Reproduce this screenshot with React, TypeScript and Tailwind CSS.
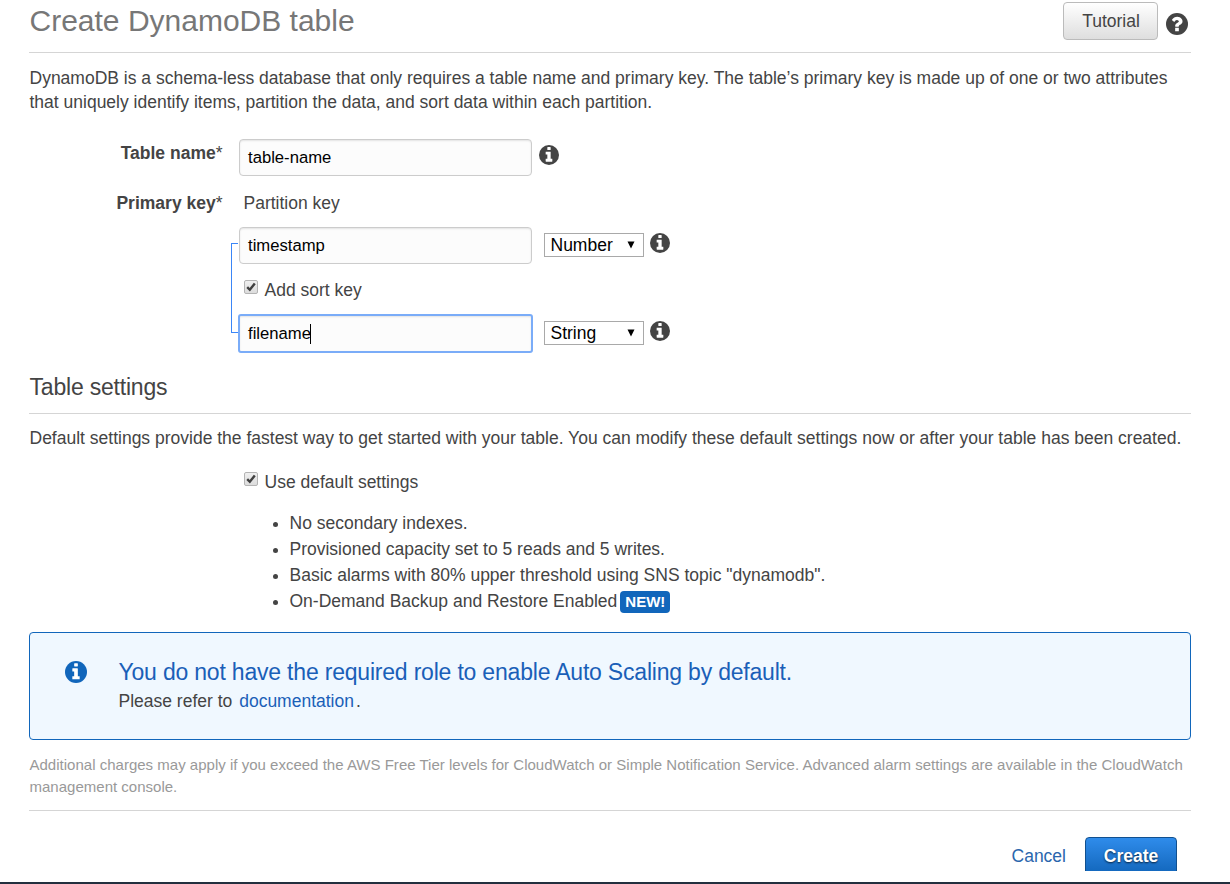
import type { ReactNode } from "react";

const INFO =
  "M1152 1376v-160q0-14-9-23t-23-9h-96v-512q0-14-9-23t-23-9h-320q-14 0-23 9t-9 23v160q0 14 9 23t23 9h96v320h-96q-14 0-23 9t-9 23v160q0 14 9 23t23 9h448q14 0 23-9t9-23zM1024 480v-160q0-14-9-23t-23-9h-192q-14 0-23 9t-9 23v160q0 14 9 23t23 9h192q14 0 23-9t9-23z";
const HELP =
  "M1024 1376v-192q0-14-9-23t-23-9h-192q-14 0-23 9t-9 23v192q0 14 9 23t23 9h192q14 0 23-9t9-23zM1280 704q0-88-55.5-163t-138.5-116-170-41q-243 0-371 213-15 24 8 42l132 100q7 6 19 6 16 0 25-12 53-68 86-92 34-24 86-24 48 0 85.5 26t37.5 59q0 38-20 61t-68 45q-63 28-115.5 86.5t-52.5 125.5v36q0 14 9 23t23 9h192q14 0 23-9t9-23q0-19 21.5-49.5t54.5-49.5q32-18 49-28.5t46-35 44.5-48 28-60.5 12.5-81z";

function DiscIcon({ glyph, className }: { glyph: string; className: string }) {
  return (
    <svg viewBox="128 128 1536 1536" className={`shrink-0 ${className}`} aria-hidden="true">
      <circle cx="896" cy="896" r="768" fill="currentColor" />
      <path d={glyph} fill="#fff" />
    </svg>
  );
}

function TextField({ value, focused = false }: { value: string; focused?: boolean }) {
  return (
    <div
      className={
        focused
          ? "-mx-px -my-px flex h-[39px] w-[295px] shrink-0 items-center rounded-[3px] border-2 border-[#7aacf8] bg-[#fcfcfc] pl-[8px] text-[16.67px] text-black shadow-[inset_0_1px_2px_rgba(0,0,0,0.1)]"
          : "flex h-[37px] w-[293px] shrink-0 items-center rounded-[4px] border border-[#ccc] bg-[#fcfcfc] pl-[8px] text-[16.67px] text-black shadow-[inset_0_1px_2px_rgba(0,0,0,0.1)]"
      }
    >
      {value}
      {focused && <span className="-ml-px h-5 w-px bg-black" />}
    </div>
  );
}

function TypeSelect({ value }: { value: string }) {
  return (
    <div className="ml-3 flex h-6 w-[100px] items-center justify-between border border-[#a9a9a9] bg-white pl-[5.5px] pr-[8px] text-[17.5px] text-black">
      <span>{value}</span>
      <svg viewBox="0 0 8 8" className="h-2 w-2" aria-hidden="true">
        <path d="M0.5 0.5h7L4 7.6z" fill="#000" />
      </svg>
    </div>
  );
}

function KeyRow({ name, type, focused = false }: { name: string; type: string; focused?: boolean }) {
  return (
    <div className="flex h-[37px]">
      <TextField value={name} focused={focused} />
      <div className="flex pt-[6px]">
        <TypeSelect value={type} />
        <DiscIcon glyph={INFO} className="-mt-[0.5px] ml-[6px] h-5 w-5 text-[#444]" />
      </div>
    </div>
  );
}

function CheckRow({ children, className }: { children: ReactNode; className: string }) {
  return (
    <div className={`flex h-6 ${className}`}>
      <svg viewBox="0 0 14 14" className="mr-[6.5px] mt-[2px] h-[14px] w-[14px] shrink-0" aria-hidden="true">
        <defs>
          <linearGradient id="box" x1="0" y1="0" x2="0" y2="1">
            <stop offset="0" stopColor="#f0f0f0" />
            <stop offset="1" stopColor="#dcdcdc" />
          </linearGradient>
        </defs>
        <rect x="0.5" y="0.5" width="13" height="13" rx="1.5" fill="url(#box)" stroke="#b4b4b4" />
        <path d="M3.2 7.2 5.8 9.8 10.8 3.4" fill="none" stroke="#404040" strokeWidth="2.4" />
      </svg>
      <span>{children}</span>
    </div>
  );
}

export default function App() {
  return (
    <div className="flex h-[884px] w-[1230px] flex-col overflow-hidden border-b-2 border-[#232f3e] bg-white pl-[29px] pr-[39px] font-['Liberation_Sans',Arial,sans-serif] text-[17.5px] leading-6 text-[#444]">
      <header className="flex h-[53px] shrink-0 justify-between border-b border-[#d5d5d5]">
        <h1 className="mt-[2px] pl-[0.5px] text-[30px] leading-[38px] text-[#777]">Create DynamoDB table</h1>
        <div className="flex pt-[2px]">
          <button className="h-[38px] w-[95px] rounded-[4px] border border-[#bbb] bg-linear-to-b from-white to-[#dedede] pl-px text-[17.5px] leading-9">
            Tutorial
          </button>
          <DiscIcon glyph={HELP} className="ml-[8px] mr-[3px] mt-[11px] h-[22px] w-[22px] text-[#444]" />
        </div>
      </header>

      <p className="mt-[13px] pl-[0.5px]">
        <span className="block whitespace-nowrap">DynamoDB is a schema-less database that only requires a table name and primary key. The table’s primary key is made up of one or two attributes</span>
        <span className="block whitespace-nowrap">that uniquely identify items, partition the data, and sort data within each partition.</span>
      </p>

      <section className="mt-[25px] h-[214px] shrink-0">
        <div className="flex h-[37px]">
          <div className="mr-[16.5px] w-[193.5px] pt-[2px] text-right"><b>Table name</b>*</div>
          <TextField value="table-name" />
          <DiscIcon glyph={INFO} className="ml-[7px] mt-[5.5px] h-5 w-5 text-[#444]" />
        </div>
        <div className="mt-[15px] flex h-6">
          <div className="mr-[21px] w-[193.5px] text-right"><b>Primary key</b>*</div>
          <div>Partition key</div>
        </div>
        <div className="mt-3 flex pl-[202px]">
          <div className="mt-4 h-[90px] w-[7px] border-y border-l border-[#3b86f7]" />
          <div className="ml-px">
            <KeyRow name="timestamp" type="Number" />
            <CheckRow className="mb-[13px] mt-[14px] ml-[5px]">Add sort key</CheckRow>
            <KeyRow name="filename" type="String" focused />
          </div>
        </div>
      </section>

      <h2 className="mt-[17px] h-[44px] shrink-0 border-b border-[#d5d5d5] pl-[0.5px] text-[23px] leading-[34px] tracking-[-0.2px]">Table settings</h2>
      <p className="mt-3 whitespace-nowrap pl-[0.5px]">Default settings provide the fastest way to get started with your table. You can modify these default settings now or after your table has been created.</p>

      <CheckRow className="mt-5 ml-[215px]">Use default settings</CheckRow>
      <ul className="mt-4 list-disc pl-[260.5px] leading-[26px]">
        <li>No secondary indexes.</li>
        <li>Provisioned capacity set to 5 reads and 5 writes.</li>
        <li>Basic alarms with 80% upper threshold using SNS topic "dynamodb".</li>
        <li className="h-[26px] whitespace-nowrap">
          On-Demand Backup and Restore Enabled
          <span className="ml-[3px] inline-block h-[22px] w-[50px] rounded-[4px] bg-[#1166bb] text-center text-[15px] font-bold leading-[22px] text-white">NEW!</span>
        </li>
      </ul>

      <div className="mt-[18px] flex h-[108px] shrink-0 rounded-[4px] border border-[#1166bb] bg-[#f0f8ff] pl-[35px] pt-[25px]">
        <DiscIcon glyph={INFO} className="mt-[3px] h-[22px] w-[22px] text-[#1166bb]" />
        <div className="ml-[31.5px] -mt-px">
          <h3 className="text-[23px] leading-[30px] tracking-[-0.2px] text-[#1a5fb8]">You do not have the required role to enable Auto Scaling by default.</h3>
          <p className="mt-[2px]">Please refer to <a className="ml-[2px] mr-[2px] text-[#1a5fb8]">documentation</a>.</p>
        </div>
      </div>

      <p className="mt-[14px] pl-[0.5px] text-[15px] leading-[22px] tracking-[0.011px] text-[#999]">
        <span className="block whitespace-nowrap">Additional charges may apply if you exceed the AWS Free Tier levels for CloudWatch or Simple Notification Service. Advanced alarm settings are available in the CloudWatch</span>
        <span className="block">management console.</span>
      </p>

      <footer className="mt-3 flex h-[61px] shrink-0 justify-end overflow-hidden border-t border-[#d5d5d5] pr-[14px] pt-[26px]">
        <a className="mr-[19px] mt-[7px] text-[#2a66ad]">Cancel</a>
        <button className="h-[38px] w-[92px] shrink-0 rounded-[4px] border border-[#11508f] bg-linear-to-b from-[#2f8ceb] to-[#1166bb] text-[17.5px] font-bold leading-9 text-white [text-shadow:0_1px_2px_rgba(0,0,0,0.7)]">
          Create
        </button>
      </footer>
    </div>
  );
}
